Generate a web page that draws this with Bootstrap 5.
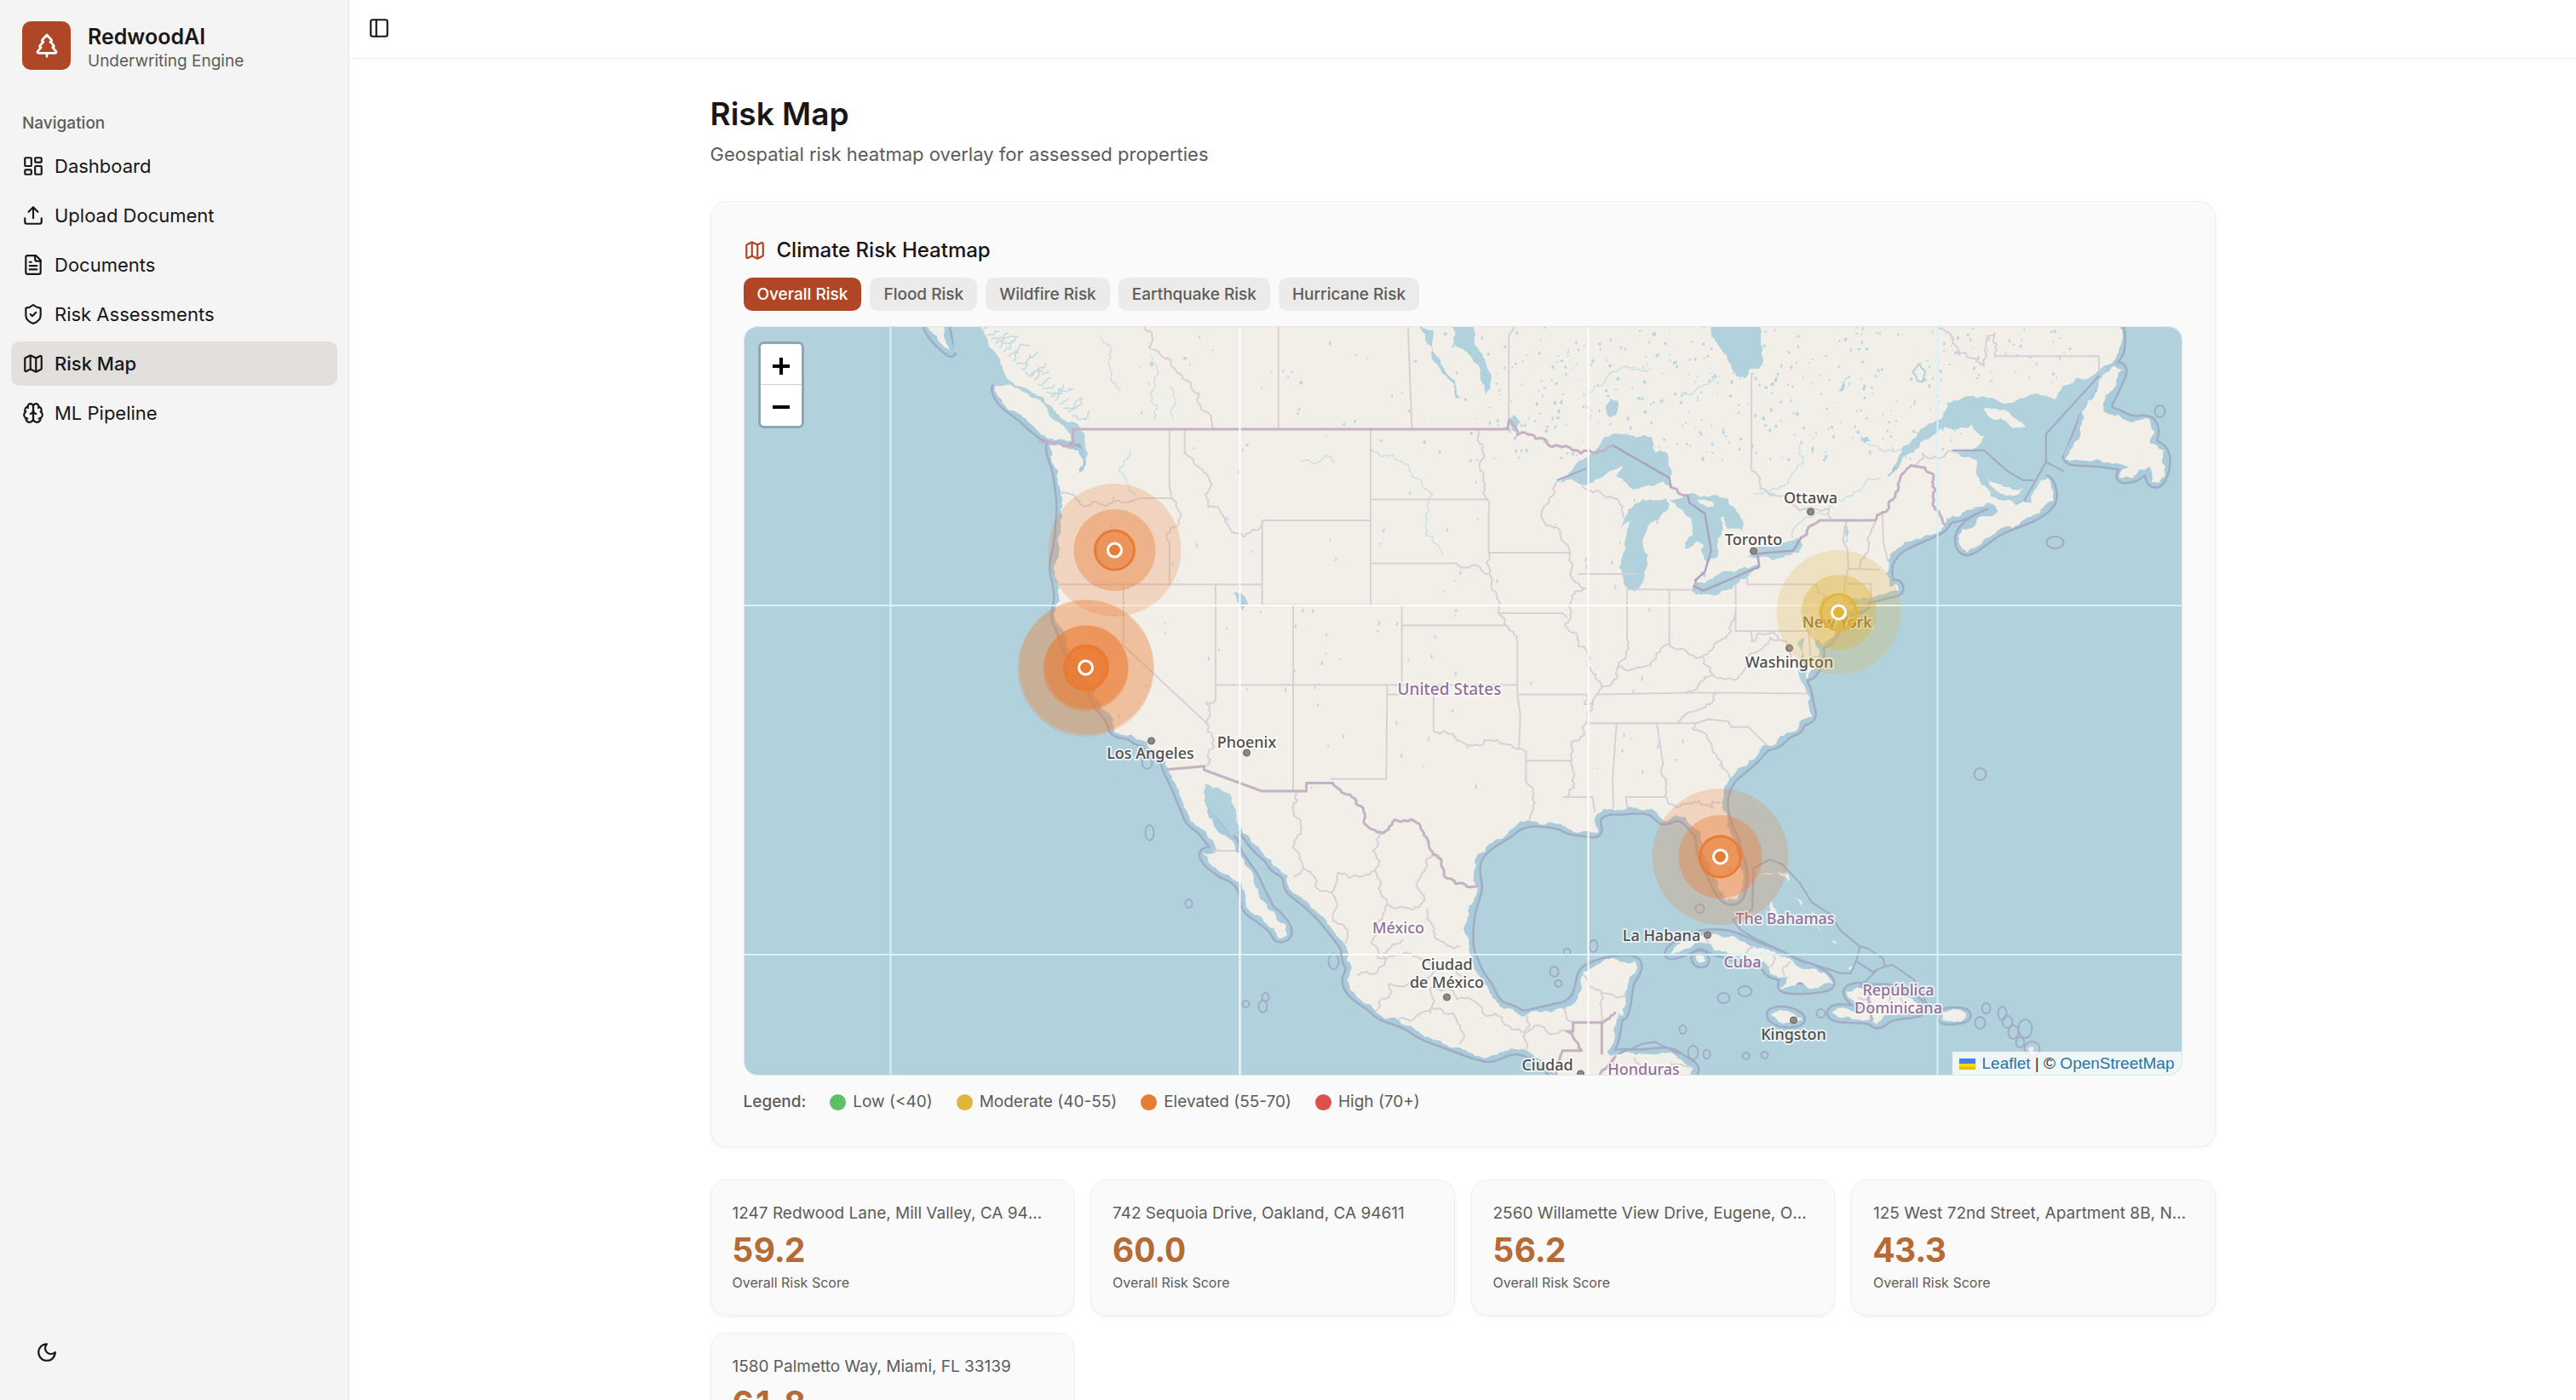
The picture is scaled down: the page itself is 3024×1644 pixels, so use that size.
<!DOCTYPE html>
<html lang="en">
<head>
<meta charset="utf-8">
<meta name="viewport" content="width=device-width, initial-scale=1">
<title>Risk Map - RedwoodAI</title>
<link href="https://cdn.jsdelivr.net/npm/bootstrap@5.3.0/dist/css/bootstrap.min.css" rel="stylesheet">
<style>
:root{--ink:#171717;--dim:#5c5c5c;--brand:#af4727;--line:#ebebeb;--panel:#fafafa}
body{font-family:Inter,"Liberation Sans",sans-serif;font-size:22px;line-height:32px;color:var(--ink);background:#fff}
.ico{width:26px;height:26px;flex:none;fill:none;stroke:currentColor;stroke-width:2;stroke-linecap:round;stroke-linejoin:round}
.fs-xs{font-size:19px;line-height:26px}
.dim{color:var(--dim)}
.side{width:410px;flex:none;background:#f4f4f4;border-right:1px solid #e6e6e6}
.brand-row{height:106px;padding:0 26px;gap:20px}
.brand-tile{width:57px;height:57px;border-radius:10px;background:var(--brand);color:#fff}
.brand-tile .ico{width:32px;height:32px}
.brand-name{font-size:25px;line-height:32px;font-weight:600;padding-top:5px}
.side-label{padding:26px 26px 11px;font-weight:500}
.side-nav{padding:0 13px;gap:6px}
.side-nav .nav-link{height:52px;padding:0 13px;gap:12px;border-radius:10px;color:var(--ink)}
.side-nav .nav-link.active{background:#e3dfdc;font-weight:500}
.icon-btn{width:46px;height:46px;padding:0;color:var(--ink)}
.side-foot{padding:0 32px 33px}
.topbar{height:69px;padding:0 12px 2px;border-bottom:1px solid var(--line)}
.scroller{min-height:0;overflow:auto;scrollbar-width:none}
.page{max-width:1843px;padding:40px 38px 38px}
.page-title{font-size:37px;line-height:50px;font-weight:600;margin:0}
.page-sub{padding-top:6px;margin:0 0 39px}
.panel{background:var(--panel);border:1px solid #efefef;border-radius:19px;box-shadow:0 2px 4px rgba(0,0,0,.05)}
.panel-big{padding:38px}
.panel-title{font-size:24px;line-height:38px;font-weight:500;margin:0;gap:13px}
.panel-title .ico{color:var(--brand)}
.chip{height:39px;padding:0 16px;border:0;border-radius:10px;font-size:19px;line-height:26px;font-weight:500;background:#ecebe9;color:var(--dim)}
.chip.on{background:var(--brand);color:#fff}
.chips{gap:10px;padding:13px 0 18px}
.map-box{height:880px;border:1px solid #e3e6e7;border-radius:16px;overflow:hidden;background:#b1d2dd}
.map-box>svg{display:block;width:100%;height:100%}
.zoom-ctl{left:16px;top:17px;border:3px solid rgba(0,0,0,.2);border-radius:7px;background-clip:padding-box}
.zoom-ctl button{width:48px;height:48px;border:0;background:#fff;color:#000;padding:0}
.zoom-ctl button:first-child{border-radius:4px 4px 0 0;border-bottom:1px solid #ccc}
.zoom-ctl button:last-child{border-radius:0 0 4px 4px}
.attrib{right:0;bottom:0;background:rgba(255,255,255,.8);padding:0 8px;font-family:"Liberation Sans",Arial,sans-serif;font-size:19px;line-height:27px;color:#333}
.attrib a{color:#2a73a5;text-decoration:none}
.attrib svg{margin-right:2px}
.city{font:500 18px "Noto Sans","Open Sans",sans-serif;fill:#4f4f4f}
.land-name{font:500 18px "Noto Sans","Open Sans",sans-serif;fill:#92719a}
.land-name.wide{font-size:19px}
.city,.land-name{text-anchor:middle;paint-order:stroke;stroke:rgba(255,255,255,.7);stroke-width:4px;stroke-linejoin:round}
.legend{gap:28px;padding-top:18px;padding-bottom:1px}
.swatch{width:19px;height:19px;border-radius:50%}
.score-row{--bs-gutter-x:19px;--bs-gutter-y:20px;padding-top:38px}
.mini{padding:26px 30px 26px 25px}
.score{font-size:39px;line-height:52px;font-weight:700;font-variant-numeric:tabular-nums;color:#b56b35;padding-top:4px}
.tiny{font-size:16px;line-height:24px}
</style>
</head>
<body>
<svg class="d-none" aria-hidden="true">
  <symbol id="i-map" viewBox="0 0 24 24"><path d="M14.106 5.553a2 2 0 0 0 1.788 0l3.659-1.83A1 1 0 0 1 21 4.619v12.764a1 1 0 0 1-.553.894l-4.553 2.277a2 2 0 0 1-1.788 0l-4.212-2.106a2 2 0 0 0-1.788 0l-3.659 1.83A1 1 0 0 1 3 19.381V6.618a1 1 0 0 1 .553-.894l4.553-2.277a2 2 0 0 1 1.788 0z"/><path d="M15 5.764v15M9 3.236v15"/></symbol>
</svg>
<div class="d-flex vh-100 overflow-hidden">
  <aside class="side d-flex flex-column">
    <div class="brand-row d-flex align-items-center">
      <div class="brand-tile d-flex align-items-center justify-content-center">
        <svg class="ico" viewBox="0 0 24 24"><path d="m17 14 3 3.3a1 1 0 0 1-.7 1.7H4.7a1 1 0 0 1-.7-1.7L7 14h-.3a1 1 0 0 1-.7-1.7L9 9h-.2A1 1 0 0 1 8 7.3L12 3l4 4.3a1 1 0 0 1-.8 1.7H15l3 3.3a1 1 0 0 1-.7 1.7H17Z"/><path d="M12 22v-3"/></svg>
      </div>
      <div>
        <div class="brand-name">RedwoodAI</div>
        <div class="fs-xs dim">Underwriting Engine</div>
      </div>
    </div>
    <div class="side-label fs-xs dim">Navigation</div>
    <nav class="side-nav nav flex-column">
      <a class="nav-link d-flex align-items-center" href="#"><svg class="ico" viewBox="0 0 24 24"><rect x="3" y="3" width="7" height="9" rx="1"/><rect x="14" y="3" width="7" height="5" rx="1"/><rect x="14" y="12" width="7" height="9" rx="1"/><rect x="3" y="16" width="7" height="5" rx="1"/></svg>Dashboard</a>
      <a class="nav-link d-flex align-items-center" href="#"><svg class="ico" viewBox="0 0 24 24"><path d="M21 15v4a2 2 0 0 1-2 2H5a2 2 0 0 1-2-2v-4M17 8l-5-5-5 5M12 3v12"/></svg>Upload Document</a>
      <a class="nav-link d-flex align-items-center" href="#"><svg class="ico" viewBox="0 0 24 24"><path d="M15 2H6a2 2 0 0 0-2 2v16a2 2 0 0 0 2 2h12a2 2 0 0 0 2-2V7Z"/><path d="M14 2v4a2 2 0 0 0 2 2h4M10 9H8M16 13H8M16 17H8"/></svg>Documents</a>
      <a class="nav-link d-flex align-items-center" href="#"><svg class="ico" viewBox="0 0 24 24"><path d="M20 13c0 5-3.5 7.5-7.66 8.95a1 1 0 0 1-.67-.01C7.5 20.5 4 18 4 13V6a1 1 0 0 1 1-1c2 0 4.5-1.2 6.24-2.72a1.17 1.17 0 0 1 1.52 0C14.51 3.81 17 5 19 5a1 1 0 0 1 1 1z"/><path d="m9 12 2 2 4-4"/></svg>Risk Assessments</a>
      <a class="nav-link active d-flex align-items-center" href="#" aria-current="page"><svg class="ico" viewBox="0 0 24 24"><use href="#i-map"/></svg>Risk Map</a>
      <a class="nav-link d-flex align-items-center" href="#"><svg class="ico" viewBox="0 0 24 24"><path d="M12 5a3 3 0 1 0-5.997.125 4 4 0 0 0-2.526 5.77 4 4 0 0 0 .556 6.588A4 4 0 1 0 12 18Z"/><path d="M12 5a3 3 0 1 1 5.997.125 4 4 0 0 1 2.526 5.77 4 4 0 0 1-.556 6.588A4 4 0 1 1 12 18Z"/><path d="M15 13a4.5 4.5 0 0 1-3-4 4.5 4.5 0 0 1-3 4M17.599 6.5a3 3 0 0 0 .399-1.375M6.003 5.125A3 3 0 0 0 6.401 6.5M3.477 10.896a4 4 0 0 1 .585-.396M19.938 10.5a4 4 0 0 1 .585.396M6 18a4 4 0 0 1-1.967-.516M19.967 17.484A4 4 0 0 1 18 18"/></svg>ML Pipeline</a>
    </nav>
    <div class="side-foot mt-auto">
      <button class="icon-btn btn d-flex align-items-center justify-content-center" type="button" aria-label="Toggle theme"><svg class="ico" viewBox="0 0 24 24"><path d="M12 3a6 6 0 0 0 9 9 9 9 0 1 1-9-9Z"/></svg></button>
    </div>
  </aside>

  <div class="d-flex flex-column flex-fill overflow-hidden">
    <header class="topbar d-flex align-items-center flex-shrink-0">
      <button class="icon-btn btn d-flex align-items-center justify-content-center" type="button" aria-label="Toggle sidebar"><svg class="ico" viewBox="0 0 24 24"><rect x="3" y="3" width="18" height="18" rx="2"/><path d="M9 3v18"/></svg></button>
    </header>
    <main class="scroller flex-grow-1">
      <div class="page mx-auto">
        <h1 class="page-title">Risk Map</h1>
        <p class="page-sub dim">Geospatial risk heatmap overlay for assessed properties</p>

        <section class="panel panel-big">
          <h2 class="panel-title d-flex align-items-center"><svg class="ico" viewBox="0 0 24 24"><use href="#i-map"/></svg>Climate Risk Heatmap</h2>
          <div class="chips d-flex flex-wrap">
            <button class="chip on" type="button">Overall Risk</button>
            <button class="chip" type="button">Flood Risk</button>
            <button class="chip" type="button">Wildfire Risk</button>
            <button class="chip" type="button">Earthquake Risk</button>
            <button class="chip" type="button">Hurricane Risk</button>
          </div>
          <div class="map-box position-relative">
            <svg id="map" viewBox="873 384 1688 878" preserveAspectRatio="xMidYMid slice" role="img" aria-label="Map of North America"></svg>
            <div class="zoom-ctl position-absolute d-flex flex-column">
              <button type="button" aria-label="Zoom in"><svg width="20" height="20" viewBox="0 0 20 20"><path d="M0 10h20M10 0v20" stroke="#000" stroke-width="4"/></svg></button>
              <button type="button" aria-label="Zoom out"><svg width="20" height="20" viewBox="0 0 20 20"><path d="M0 10h20" stroke="#000" stroke-width="4"/></svg></button>
            </div>
            <div class="attrib position-absolute"><svg width="19" height="13" viewBox="0 0 19 13"><path fill="#4c7be1" d="M0 0h19v7H0z"/><path fill="#ffd500" d="M0 6h19v4H0z"/><path fill="#e0bc00" d="M0 10h19v3H0z"/></svg> <a href="#">Leaflet</a> | © <a href="#">OpenStreetMap</a></div>
          </div>
          <div class="legend fs-xs dim d-flex flex-wrap align-items-center">
            <span class="fw-medium">Legend:</span>
            <span class="d-flex align-items-center gap-2"><i class="swatch" style="background:#5dc069"></i>Low (&lt;40)</span>
            <span class="d-flex align-items-center gap-2"><i class="swatch" style="background:#e1b43c"></i>Moderate (40-55)</span>
            <span class="d-flex align-items-center gap-2"><i class="swatch" style="background:#e97c34"></i>Elevated (55-70)</span>
            <span class="d-flex align-items-center gap-2"><i class="swatch" style="background:#dc4f4b"></i>High (70+)</span>
          </div>
        </section>

        <div class="row row-cols-4 score-row">
          <div class="col"><div class="panel mini"><div class="fs-xs dim text-truncate">1247 Redwood Lane, Mill Valley, CA 94941</div><div class="score">59.2</div><div class="tiny dim">Overall Risk Score</div></div></div>
          <div class="col"><div class="panel mini"><div class="fs-xs dim text-truncate">742 Sequoia Drive, Oakland, CA 94611</div><div class="score">60.0</div><div class="tiny dim">Overall Risk Score</div></div></div>
          <div class="col"><div class="panel mini"><div class="fs-xs dim text-truncate">2560 Willamette View Drive, Eugene, OR 97401</div><div class="score">56.2</div><div class="tiny dim">Overall Risk Score</div></div></div>
          <div class="col"><div class="panel mini"><div class="fs-xs dim text-truncate">125 West 72nd Street, Apartment 8B, New York, NY 10023</div><div class="score">43.3</div><div class="tiny dim">Overall Risk Score</div></div></div>
          <div class="col"><div class="panel mini"><div class="fs-xs dim text-truncate">1580 Palmetto Way, Miami, FL 33139</div><div class="score">61.8</div><div class="tiny dim">Overall Risk Score</div></div></div>
        </div>
      </div>
    </main>
  </div>
</div>

<script>
// Web Mercator at zoom 4; lists are "lon,lat lon,lat ..."
const X = lon => 2274 + (lon + 67.5) * 18.204;
const Y = lat => 711 + (0.7854 - Math.log(Math.tan(Math.PI / 4 + lat * Math.PI / 360))) * 1043;
let seed = 7;
const rnd = () => (seed = (seed * 16807) % 2147483647) / 2147483647;
const pts = s => s.trim().split(/\s+/).map(p => { const [a, b] = p.split(',').map(Number); return [X(a), Y(b)]; });
// coastlines and river borders get small random bends between their fixed points
function rough(p, q, k, out) {
  const dx = q[0] - p[0], dy = q[1] - p[1], len = Math.hypot(dx, dy);
  if (len < 4 || !k) { out.push(q); return; }
  const t = (rnd() - .5) * k, m = [(p[0] + q[0]) / 2 - dy * t, (p[1] + q[1]) / 2 + dx * t];
  rough(p, m, k, out); rough(m, q, k, out);
}
function path(s, k, closed) {
  const a = pts(s), out = [a[0]];
  for (let i = 1; i < a.length; i++) rough(a[i - 1], a[i], k, out);
  if (closed) rough(a[a.length - 1], a[0], k, out);
  return 'M' + out.map(p => p[0].toFixed(1) + ' ' + p[1].toFixed(1)).join('L') + (closed ? 'Z' : '');
}
// rounded outline through the edge midpoints, for the territorial-water line
function soft(s) {
  const a = pts(s), n = a.length, mid = (p, q) => ((p[0] + q[0]) / 2).toFixed(1) + ' ' + ((p[1] + q[1]) / 2).toFixed(1);
  let r = 'M' + mid(a[n - 1], a[0]);
  for (let i = 0; i < n; i++) r += 'Q' + a[i][0].toFixed(1) + ' ' + a[i][1].toFixed(1) + ' ' + mid(a[i], a[(i + 1) % n]);
  return r + 'Z';
}
const land = [
`-131,57 -130.6,54.2 -129.5,53.3 -128.8,52.7 -128.2,52.1 -127.8,51.6 -127.5,51.1 -126.8,50.8 -125.8,50.5 -125,50.1 -124.5,49.8 -123.8,49.4 -123.2,49.3 -122.8,49 -122.5,48.6 -122.3,48 -122.4,47.5 -122.9,47.1 -122.7,47.8 -122.9,48.1 -123.5,48.15 -124.7,48.38 -124.6,47.9 -124.2,47.2 -124.05,46.3 -123.95,45.6 -124.05,44.7 -124.15,43.8 -124.5,42.85 -124.2,42 -124.1,41.2 -124.4,40.4 -123.8,39.5 -123.7,38.9 -123,38.3 -122.5,37.7 -122.4,37.2 -121.9,36.95 -121.95,36.4 -121.3,35.7 -120.7,35.1 -120.6,34.55 -119.5,34.4 -119.2,34.15 -118.5,34.02 -118.4,33.75 -117.9,33.6 -117.3,33 -117.12,32.53 -116.7,31.8 -116.3,31 -115.95,30.3 -115.7,29.7 -114.9,29.2 -114.5,28.7 -114.1,28.3 -114.05,27.9 -114.9,27.9 -114.5,27.3 -114,27 -113.6,26.7 -113.2,26.6 -112.5,26.2 -112.15,25.5 -112.1,24.8 -111.7,24.4 -111,24 -110.3,23.5 -110,22.9 -109.45,23.1 -109.5,23.6 -110.2,24.3 -110.65,24.6 -110.75,24.9 -111.3,25.8 -111.6,26.5 -112.2,27.2 -112.8,28 -112.9,28.5 -113.5,28.9 -114.3,29.8 -114.65,30.5 -114.8,31.2 -114.8,31.75 -114.2,31.5 -113.5,31.3 -113.1,31.2 -113,30.7 -112.7,30 -112.4,29.3 -111.9,28.8 -111.6,28.4 -111.1,27.95 -110.5,27.5 -110.3,27.1 -109.9,26.9 -109.4,26.6 -109.3,25.8 -108.7,25.4 -108,24.9 -107.2,24.2 -106.5,23.4 -106,22.8 -105.6,22.3 -105.6,21.6 -105.3,21.2 -105.4,20.75 -105.6,20.4 -105.4,19.8 -104.7,19.2 -104,18.85 -103.5,18.3 -102.2,17.9 -101.5,17.6 -100.8,17.1 -99.7,16.7 -98.5,16.3 -97.6,15.95 -96.5,15.65 -95.9,15.8 -95,16.2 -94,16.1 -93,15.5 -92.3,14.7 -91.5,14 -91,13 -83,13 -83.4,14.5 -83.15,15 -83.9,15.4 -84.5,15.85 -85.2,15.95 -86,15.85 -87,15.8 -87.9,15.85 -88.5,15.75 -88.8,15.95 -88.5,16.4 -88.3,17.1 -88.2,17.8 -88.05,18.4 -87.8,18.2 -87.6,19 -87.5,19.8 -87.4,20.3 -86.85,21.1 -87,21.55 -88.1,21.6 -89.5,21.3 -90.35,20.9 -90.5,20.2 -90.7,19.4 -91.3,18.8 -92,18.65 -93,18.45 -94.3,18.15 -94.8,18.5 -95.7,18.75 -96.2,19.3 -96.5,20 -97.1,20.7 -97.4,21.4 -97.75,22.2 -97.8,23 -97.7,24.3 -97.4,25.2 -97.15,25.9 -97.4,26.8 -97.2,27.7 -96.4,28.4 -95.2,29 -94.7,29.4 -93.8,29.7 -92.5,29.6 -91.8,29.5 -91.2,29.2 -90.2,29.1 -89.4,29 -89.6,29.6 -89.4,30.1 -88.6,30.35 -88,30.3 -87,30.4 -86,30.35 -85.5,30 -85.2,29.7 -84.4,30 -83.8,29.9 -83.2,29.3 -82.75,28.9 -82.7,28 -82.5,27.4 -82,26.6 -81.7,25.9 -81.1,25.15 -80.4,25.2 -80.15,25.8 -80.05,26.8 -80.5,28 -80.6,28.5 -81.1,29.4 -81.4,30.4 -81.3,31.3 -80.8,32.1 -79.9,32.7 -79.2,33.2 -78.6,33.85 -77.9,33.9 -77.2,34.5 -76.5,34.7 -76.4,35.1 -75.6,35.3 -75.8,35.9 -76,36.8 -76.3,37.2 -76.4,38 -76.5,39.2 -76.1,39.4 -76.1,38.3 -75.9,37.3 -75.2,38.1 -75.1,38.7 -75.5,39.4 -74.9,39 -74.1,39.7 -74,40.6 -73.5,41 -72.5,41.27 -71.4,41.45 -70.7,41.6 -70,41.7 -70.1,42 -70.6,41.9 -70.8,42.5 -70.7,43.1 -70.1,43.7 -69,44.1 -68.3,44.3 -67.1,44.7 -66.9,45.1 -66,45.2 -64.9,45.6 -64.2,45.8 -63.6,45.4 -64.6,45.2 -65.9,44.6 -66.1,43.9 -65.6,43.5 -64.3,44.2 -63.5,44.6 -62,45 -61,45.3 -60,45.9 -60.4,46.9 -61,46.6 -61.4,45.8 -62.5,45.7 -63.5,45.9 -64.1,46.1 -64.7,46.6 -65,47.2 -65,47.7 -65.7,47.8 -66.3,48 -65.3,48.1 -64.4,48.7 -65.3,49.2 -67,49.1 -68.5,48.5 -69.8,47.7 -71,46.9 -71.3,46.8 -70,47.8 -69.3,48.4 -68.6,49 -67.4,49.4 -66.9,50.1 -65,50.3 -62,50.3 -60,50.25 -58.6,51.1 -57,51.5 -56,51.9 -55.7,52.4 -55.8,53.2 -56.5,54 -57,57`,
`-128.3,50.8 -127.5,50.85 -125.5,50.25 -124.8,49.6 -123.8,49.1 -123.3,48.5 -124.7,48.6 -125.5,48.9 -126.6,49.6 -127.8,50.1`,
`-133.1,54 -131.7,54 -131.6,53.3 -131.3,52.4 -131,52.1 -131.8,52.5 -132.5,53`,
`-59.3,47.7 -58.6,48.5 -58.2,49.2 -57.8,50.2 -57,51.1 -56.2,51.6 -55.5,51.5 -56,50.8 -56.8,49.8 -55.8,49.6 -55,49.3 -53.8,49.4 -53.5,48.9 -53.8,48.4 -52.9,48.1 -52.8,47.4 -53.2,46.7 -53.7,46.7 -53.9,47.4 -54.9,46.9 -55.8,46.9 -55.2,47.4 -56.5,47.6 -58,47.65`,
`-64.5,49.9 -63.4,49.8 -61.8,49.1 -62.6,49.05 -63.8,49.4`,
`-64.3,46.9 -64,46.7 -63.2,46.5 -62,46.45 -62.6,46.1 -63.8,46.4`,
`-73.9,40.6 -72,41 -72.6,41 -73.7,40.85`,
`-84.9,21.9 -84.3,22.5 -83.2,23 -82,23.15 -80.6,23 -79.3,22.4 -77.5,21.8 -76.5,21.2 -75.6,21.1 -74.2,20.2 -75.2,19.9 -77.7,19.85 -77.1,20.6 -78.3,20.8 -78.7,21.5 -80.2,21.8 -81.8,22.15 -82.8,22.7 -83.5,22.3 -84.2,22.05`,
`-83.1,21.8 -82.7,21.9 -82.5,21.5 -82.9,21.45`,
`-74.4,18.35 -74,18.65 -72.7,18.5 -72.4,18.7 -72.8,19.1 -73.4,19.7 -72.7,19.95 -71.7,19.8 -70.7,19.85 -69.9,19.6 -69.2,19.3 -68.4,18.65 -69,18.4 -70.5,18.3 -71.4,17.65 -71.8,18.1 -73.8,18.1`,
`-78.3,18.3 -77.8,18.5 -76.9,18.4 -76.2,17.95 -77.1,17.8 -77.8,17.9`,
`-67.2,18.4 -65.7,18.4 -65.7,18.1 -67.2,17.95`
];
const islets = [`-78.2,25.1 -77.9,24.6 -77.7,23.9 -78.3,24.4`, `-77.9,26.8 -77.1,26.6 -77.1,26.2 -77.3,26.5`, `-78.9,26.6 -78,26.7 -78.2,26.6`, `-73.3,21.1 -73,21.3 -73.1,21`, `-76.8,25.3 -76.2,25 -76.3,24.7 -76.6,25.2`, `-75.8,24.6 -75.3,24.2 -75.6,24.4`, `-75.3,23.6 -74.9,23.1 -75.1,23.4`, `-74.3,22.8 -73.9,22.6 -74.2,22.6`, `-61.7,16.2 -61.3,16.3 -61.4,15.9`, `-61.4,15.5 -61.3,15.2 -61.3,15.6`, `-61.1,14.8 -60.9,14.6 -60.9,14.9`];
const inner = [
`-65,45.6 -61.6,45.9 -60.5,47 -59.4,47.9 -58.4,49.6 -56.6,51.4 -57,52 -66,50.8 -71,47.5 -68,47 -65,46`,
`-133,56 -131.2,54.2 -130.9,52.2 -128.5,50.9 -125,49 -122.8,48.4 -122,47 -121,49 -125,52 -127,56`,
`-76.8,39.6 -76.8,36.9 -76,37.1 -75.7,38 -75.7,39.6`, `-74.2,41.2 -73.7,40.8 -72.2,41 -71.7,41.5`,
`-115,32 -113,31.4 -112.4,29.2 -113,28.8 -115,31`
];
const lakes = [
`-92.1,46.75 -91,47.3 -90,47.9 -89.2,48.4 -88.4,48.8 -87.5,48.8 -86.5,48.75 -86,48.7 -85.7,48 -84.9,47.95 -84.7,47.3 -84.6,46.5 -85.2,46.75 -86.5,46.5 -87.4,46.5 -88.2,46.95 -87.8,47.45 -88.6,47.2 -89.5,46.85 -90.5,46.6 -91.2,46.85`,
`-85,46 -86,45.95 -87,45.75 -87.7,45.1 -87.9,44.6 -87.2,45 -87.6,44.2 -87.9,43.2 -87.8,42.4 -87.5,41.7 -87,41.65 -86.5,42.1 -86.2,43 -86.5,43.8 -86.2,44.7 -85.5,45 -85,45.4 -84.8,45.75`,
`-84.8,45.9 -84,46 -83.5,46.2 -82,46.15 -81,45.95 -80.5,45.5 -80,44.8 -80.1,44.5 -81,44.6 -81.3,45.2 -81.5,45.1 -81.3,44.6 -81.7,43.9 -81.7,43.3 -82.4,43 -82.6,43.9 -83,44.05 -83.8,43.7 -83.8,43.95 -83.3,44.3 -83.4,45.1 -84,45.5`,
`-83.4,41.7 -82.7,41.5 -81.7,41.5 -80.5,42 -79,42.75 -79,42.9 -80.3,42.75 -81.2,42.65 -82,42.25 -83.1,42.05`,
`-79.8,43.3 -79,43.27 -77.5,43.27 -76.4,43.5 -76.2,43.9 -76.5,44.2 -77.5,43.95 -79,43.8`,
`-82.4,54 -82.1,52.9 -81.5,52.3 -81,51.8 -80.5,51.2 -79.9,51.1 -79.6,51.5 -79,51.5 -78.8,52.2 -79,53.3 -78.9,54`,
`-98.9,53.3 -97.5,53.3 -97.3,52.4 -96.7,51.8 -96.3,51 -96.7,50.4 -97,51.2 -97.6,52 -98.7,52.5`,
`-101.2,53.4 -100,53 -99.8,52 -99,51.2 -98.6,50.9 -98.3,50.3 -98.6,50.3 -98.9,51 -99.6,51.5 -100,51.8 -100.5,52.6`,
`-88.9,49.9 -88.6,50.3 -88.1,50.2 -88.2,49.6 -88.6,49.5`, `-73.9,50.6 -73.2,51.2 -73,51.3 -73.6,50.6`, `-72.4,48.6 -72,48.7 -71.8,48.5 -72.2,48.4`,
`-112.9,41.6 -112.4,41.6 -112,41 -112.3,40.7 -112.6,41.1`, `-95.2,49.3 -94.8,49.6 -94.4,49.3 -94.8,48.9`, `-73.4,44.9 -73.2,44.5 -73.4,43.8 -73.4,44.3`,
`-80.9,27.1 -80.7,26.8 -81.1,26.8`, `-82.8,42.6 -82.5,42.6 -82.5,42.3`
];
const national = [
`-123.3,49 -95.15,49`, `-111.07,31.33 -108.2,31.33 -108.2,31.78 -106.5,31.78`, `-114.8,32.5 -111.07,31.33`, `-117.12,32.53 -114.8,32.7 -114.8,32.5`, `-75,45 -71.5,45`, `-91.7,16.07 -90.45,16.07`, `-91,17.25 -91,17.8 -89.15,17.8 -89.15,15.9`];
const nationalWavy = [
`-95.15,49 -95.1,49.4 -94.6,48.75 -93,48.6 -92,48.3 -91,48.1 -90,48.1 -89.5,48 -88.4,48.3`, `-84.7,46.5 -84.3,46.4 -83.6,46.1`,
`-83.1,42.2 -83.2,41.9`, `-76.3,44.2 -75,45`, `-71.5,45 -71.4,45.25 -70.8,45.4 -70.3,46 -70,46.7 -69.2,47.45 -68.3,47.35 -67.8,47.07 -67.8,45.7 -67.4,45.4 -67,44.8`,
`-123.2,49 -123.3,48.7 -123.2,48.3 -124.5,48.4 -125.4,48.5`,
`-106.5,31.78 -106,31.4 -105,30.65 -104.5,29.6 -103.3,29 -102.9,29.2 -102.5,29.75 -101.4,29.77 -100.7,29.1 -100.3,28.3 -99.5,27.5 -99.1,26.4 -98,26.05 -97.2,25.95`,
`-92.2,14.5 -92.1,15.1 -91.7,16.07`, `-90.45,16.07 -91,16.9 -91.4,17.25 -91,17.25`, `-89.15,17.8 -88.3,18.4`, `-88.3,15.7 -89.3,14.5`, `-71.7,19.7 -71.9,18.8 -71.7,18`];
const nationalSea = [`-88.4,48.3 -84.8,46.9 -84.7,46.5`, `-83.6,46.1 -83.5,45.8 -82.5,45.3 -82.1,43.6 -82.5,42.6 -83.1,42.2`, `-83.2,41.9 -82.6,41.7 -81,42.2 -79,42.85 -79.1,43.4 -79.2,43.45 -76.8,43.6 -76.3,44.2`];
const states = [
`-117.03,49 -117.03,46.4`, `-119,46 -116.9,46`, `-117.03,43.8 -117.03,42`, `-116.05,49 -116.05,48`, `-124.2,42 -111.05,42`, `-120,42 -120,39 -114.63,35`, `-114.05,42 -114.05,36.2`, `-114.05,37 -94.6,37`,
`-111.05,44.5 -111.05,45 -104.05,45 -104.05,41 -111.05,41 -111.05,44.5`, `-109.05,41 -109.05,31.33`, `-102.05,41 -102.05,37`, `-104.05,41 -102.05,41 -102.05,40 -95.3,40`, `-104.05,49 -104.05,45`, `-104.05,45.94 -96.6,45.94`, `-104.05,43 -98.5,43`,
`-96.45,45.3 -96.45,43.5 -91.2,43.5`, `-95.8,40.6 -91.7,40.6`, `-94.6,39.1 -94.6,36.5 -94.4,35.4 -94.5,33.65`, `-94.6,36.5 -90.15,36.5`, `-90.65,42.5 -87,42.5`, `-87.53,41.7 -87.53,39.3`, `-84.8,41.7 -84.8,39.1`, `-87,41.76 -83.5,41.73`,
`-80.52,42 -80.52,39.72 -75.8,39.72`, `-79.76,42.25 -79.76,42 -75.35,42`, `-89.4,36.5 -83.7,36.6 -81.7,36.6 -75.9,36.55`, `-90.2,35 -83.1,35 -82.3,35.2 -81,35.1 -80.8,34.8 -79.7,34.8 -78.55,33.86`, `-85.6,35 -85.2,32.8`, `-85,31 -87.6,31 -87.5,30.4`, `-88.2,35 -88.45,32 -88.4,30.4`, `-91.6,31 -89.75,31 -89.6,30.2`, `-94.04,33 -91.15,33`, `-94.04,33.5 -94.04,32`, `-103,37 -103,36.5 -100,36.5 -100,34.6`, `-103,36.5 -103.05,32 -106.6,32`, `-73.3,43.6 -73.25,42.75 -73.5,42.05 -73.5,41.2`, `-73.25,42.75 -71.3,42.7`, `-73.5,42.03 -71.8,42.03 -71.8,41.4`, `-71.05,45.3 -71,44 -70.7,43.1`, `-75.8,39.72 -75.7,38.45 -75.05,38.45`,
`-110,54 -110,49`, `-101.7,54 -101.4,49`, `-95.15,49.4 -95.15,52.8 -94.5,53.4`, `-79.5,51.3 -79.5,47.5`, `-63.8,52 -57.1,52 -57.1,51.4`, `-114.2,28 -112.8,28`];
const statesWavy = [
`-124,46.25 -123.2,46.15 -122.8,45.7 -121.2,45.65 -119.3,45.93 -119,46`, `-117.03,46.4 -116.9,46 -116.5,45.5 -117.2,44.4 -117.03,43.8`, `-116.05,48 -115,47.3 -114.3,46.6 -114.5,45.6 -113.9,45.6 -113.4,44.9 -113,44.45 -111.5,44.55 -111.05,45`, `-114.05,36.2 -114.7,36.1 -114.63,35 -114.2,34.2 -114.5,33.5 -114.7,32.7`, `-98.5,43 -97.9,42.8 -96.5,42.5`,
`-97.2,49 -96.8,47 -96.6,46 -96.45,45.3`, `-96.45,43.5 -96.6,43 -96.4,42.5 -95.9,41.5 -95.8,40.6 -95.3,40 -94.9,39.7 -94.6,39.1`, `-91.7,40.6 -91.4,40.4`, `-90.15,36.5 -90.3,36 -89.7,36`,
`-92.1,46.7 -92.3,46.1 -92.9,45.6 -92.75,44.75 -91.3,43.8 -91.2,43.5 -91.1,42.7 -90.2,41.8 -91.1,41.2 -91.1,40.7 -91.5,40.1 -90.7,39 -90.1,38.7 -90.1,38 -89.5,37.3 -89.2,37 -89.5,36.5 -89.7,36 -90.1,35.1 -91.1,34 -91.1,33 -90.9,32.3 -91.6,31`,
`-90.4,46.55 -89,46.1 -88.1,45.9 -87.8,45.3 -87.6,45.1`, `-87.53,39.3 -87.6,38.7 -88.1,37.9`, `-89.2,37 -88.5,37.1 -88.1,37.9 -87.1,37.8 -86,38 -85.4,38.7 -84.8,39.1 -84.2,38.8 -83.6,38.6 -82.6,38.5 -82.2,38.7 -81.7,39.2 -80.8,39.7 -80.52,40.6`, `-75.35,42 -74.7,41.4 -75.1,41 -75.1,40.6 -74.8,40.2 -75.4,39.8`, `-82.6,38.4 -82.6,38.1 -81.97,37.5 -83.7,36.6`, `-81.97,37.5 -81.3,37.3 -80.3,37.5 -79.7,38.5 -78.9,38.8 -78.3,39.4 -77.7,39.3 -77,38.9 -77,38.3`, `-79.5,39.72 -79.5,39.2 -78.4,39.6 -77.7,39.3`, `-84.3,35 -83.5,35.6 -82,36.1 -81.7,36.6`, `-83.1,35 -83.3,34.7 -81.9,33.4 -81.4,32.6 -80.9,32.05`, `-85.2,32.8 -85,32 -85,31 -84.9,30.7 -82.2,30.55 -82,30.4 -82,30.75 -81.5,30.7`, `-94.04,32 -93.6,31 -93.8,29.8`, `-100,34.6 -98.5,34.1 -97,33.8 -95.5,33.9 -94.5,33.65 -94.04,33.5`, `-71.5,45 -72,44.2 -72.45,42.73`, `-73.35,45 -73.3,43.6`,
`-118.7,53.3 -116.9,51.85 -115.1,50.5 -114.05,49`, `-79.5,47.5 -78.9,46.4 -77.5,46.1 -76,45.5 -74.5,45.5 -74.4,45.1`, `-69,47.4 -68.4,47.9 -67,47.9 -66,48`, `-67.6,53.4 -66.5,52.5 -65.3,51.9 -64.5,51.6 -64.3,52.8 -63.8,52.9 -63.8,52`,
`-108.87,31.3 -108.56,29.7 -109,28.3 -108.4,27 -109,26.5`, `-108.4,27 -107.6,26.1 -106.6,25.6 -106.15,26.75 -104.7,26.5 -103.75,26.8 -103.9,28 -103.1,29.1`, `-103.75,26.8 -103.4,26.2 -103,24.9 -100.9,24.75 -100.6,25.3 -101,26.3 -100.1,27.7 -99.6,27.5`, `-106.6,25.6 -106.4,24.5 -105.7,23.5 -105.7,22.6`, `-103,24.9 -103.9,23.8 -104,22.6 -103.6,21.7 -102.5,21.9 -101.5,22 -100.5,21.5 -99.4,21.2`, `-100.4,24.6 -100,23.6 -99.5,22.7 -98.3,22.4`, `-104.9,20.7 -103.7,20.8 -103.2,22 -102,22.8`, `-103.7,18.5 -103,19.3 -102.8,20.2 -101.5,20.2 -100.4,20.2 -99.4,21.2 -98.5,20.8 -97.7,20`, `-102.2,18 -100.8,18.4 -99.4,18.5 -98.5,17.9 -98.3,16.5`, `-100.2,18.4 -100.2,19.9 -99.1,20 -98.5,19.2 -97.2,19 -96.5,18.2 -95,17.4 -94.1,17.2 -94,16.2`, `-94.1,17.2 -93.5,17.6 -92.7,17.3 -91.4,17.3`, `-94.1,17.2 -94,18.2`, `-91,17.8 -91.5,18.7`, `-90.4,20.7 -89.3,19.8 -89.2,17.8`, `-87.6,19.6 -89.3,19.8`, `-87,15.6 -86.6,14.8 -85,14.9 -83.3,15`, `-88.5,15.6 -87.8,14.6`, `-82.3,23 -82.3,22.6`, `-79.4,22.4 -79.8,22`, `-78,21.9 -78.4,21.1`, `-77,21.5 -77.4,20.7`, `-70.8,19.8 -70.6,18.4`, `-69.8,19.5 -69.9,18.5`, `-72.6,19.3 -71.9,19.2`];
const seaLines = [
`-79.36,27 -78.3,27.5 -77.5,27.2 -76.4,26.15 -75.6,25 -74.4,24.3 -73.75,23.35 -72.5,22.4 -72.7,21.65 -73.1,20.8 -73.75,20.8 -76.2,21.55 -79.3,22.9 -80.2,23.4 -80.7,24 -79.45,24.6 -79.36,27`,
`-72.5,22.4 -72,22.3 -71,21.7 -70.9,21.2 -71.7,20.9 -72.7,21.5`, `-70.9,21.2 -70.4,21.3 -69,20.4 -68.1,18.8`, `-71.5,20.9 -72.5,20 `, `-57.1,51.2 -60.5,48.8 -60.5,47.6 -61.4,46.5 -61.9,45.9`, `-60.5,47.6 -59.4,47.2`, `-66.5,48.1 -64.5,48.1 -63,47.2 -62,46.8 -61.3,46.8`, `-90.2,47.3 -92,46.8`,
`-88,15.9 -86.5,16.5 -85.7,16.6 -84.2,15.9`];
const rings = [[1349,978,5,9],[1395,1061,4,5],[1462,1179,4,4],[1482,1182,5,7],[1485,1171,4,5],[1565,1129,6,9],[1839,1118,4,4],[1870,1111,5,7],[1824,1141,5,6],[1829,1155,4,4],[2048,1164,8,6],[2023,1172,7,6],[1975,1209,4,5],[1995,1067,5,5],[2324,909,7,7],[2412,637,10,7],[2535,483,6,7],[2137,1190,5,5],[2049,1240,4,4],[2071,1239,4,4],[2003,1238,4,5],[1987,1236,6,8],[2324,1201,6,7],[2331,1184,5,6],[2350,1190,5,8],[2356,1200,6,7],[2363,1212,6,8],[2377,1208,8,11],[2371,1224,5,6],[2385,1232,9,9],[1346,896,6,7]];
const city = [['Ottawa',2125,591,2125,601],['Toronto',2058,640,2058,647],['New York',2156,737],['Washington',2100,784,2100,761],['Los Angeles',1350,891,1351,870],['Phoenix',1463,878,1463,884],['Ciudad',1698,1139],['de México',1698,1160,1698,1171],['La Habana',1950,1105,2004,1098],['Kingston',2105,1221,2105,1198],['Ciudad',1816,1257,1855,1261]];
const country = [['United States',1701,816,' wide'],['México',1641,1096,''],['Cuba',2045,1136,''],['The Bahamas',2095,1085,''],['República',2228,1169,''],['Dominicana',2228,1190,''],['Honduras',1929,1262,'']];
const heat = [[1308,646,78,48,23,'#e97c34'],[1275,783,79,49,25,'#e97c34'],[1274,785,80,50,25,'#e97c34'],[2158,719,73,44,21,'#e1b43c'],[2019,1006,80,49,24,'#e97c34']];
const pins = [[1308,646,'#e97c34'],[1274,784,'#e97c34'],[2158,719,'#e1b43c'],[2019,1006,'#e97c34']];

const d = (list, k, closed) => list.map(s => path(s, k, closed)).join('');
const landD = d(land, .36, true), islD = d(islets, .3, true), limitD = land.map(soft).join('');
let tarns = '';
for (let i = 0; i < 760; i++) {
  const lon = -119 + rnd() * 60, lat = 47.6 + rnd() * 6, r = rnd();
  if (lon < -97 && r > .16) continue;
  if (lon > -66 && lat < 50.8) continue;
  if (lon > -86 && lon < -79 && lat < 46.5) continue;
  const x = X(lon), y = Y(lat), a = .8 + rnd() * 2, b = .8 + rnd() * 2.8;
  tarns += `M${x.toFixed(1)} ${y.toFixed(1)}l${a.toFixed(1)} ${(-b).toFixed(1)} ${(a * .7).toFixed(1)} ${(b * .6).toFixed(1)} ${(-a * .5).toFixed(1)} ${(b * 1.1).toFixed(1)}z`;
}
for (let i = 0; i < 90; i++) {
  const x = X(-121 + rnd() * 40), y = Y(31.5 + rnd() * 16), b = 1 + rnd() * 3;
  tarns += `M${x.toFixed(1)} ${y.toFixed(1)}l1.5 ${b.toFixed(1)} -1 ${b.toFixed(1)} -1.5 -1z`;
}
const fjords = [];
for (let i = 0; i < 24; i++) { const t = i / 24, lo = -129.6 + t * 6.6, la = 53.3 - t * 3.9; fjords.push(`${lo},${la} ${lo + .5 + rnd() * .8},${la + rnd() * .7}`); }
const rivers = [`-121.5,52.8 -120.8,51.9 -120.2,50.6`, `-118.2,52 -118,51 -117.8,50 -118,49.4`, `-117,50.8 -116.8,49.5`, `-108.5,47.6 -107,47.9 -106.4,47.6`, `-104,48.1 -102.6,47.9 -101.6,47.4 -100.8,46.8 -100.3,45.4 -100.5,44.4 -99.4,43.4`, `-76.8,44.2 -74.6,45.3 -72.8,46.3 -71.2,46.9`, `-119.6,48.1 -120.3,47.2 -119.2,46.2`, `-84,50.5 -81.5,51.2`, `-90,50.5 -86,51.5`, `-72,48.4 -69.8,48.1`, `-76.2,48.4 -77,46.9 -78.4,46.2`, `-79.3,46.2 -78,46.2`];
const mark = heat.map(([x, y, a, b, c, f]) => `<circle cx="${x}" cy="${y}" r="${a}" fill="${f}" fill-opacity=".23"/><circle cx="${x}" cy="${y}" r="${b}" fill="${f}" fill-opacity=".38"/><circle cx="${x}" cy="${y}" r="${c}" fill="${f}" fill-opacity=".55" stroke="${f}" stroke-width="3"/>`).join('')
  + pins.map(([x, y, f]) => `<circle cx="${x}" cy="${y}" r="8" fill="${f}" stroke="#fff" stroke-width="3"/>`).join('');

document.getElementById('map').innerHTML = `
<g stroke-linejoin="round" stroke-linecap="round">
<path d="${limitD}" fill="none" stroke="#a0acc4" stroke-width="15"/>
<path d="${limitD}" fill="none" stroke="#a9cbdb" stroke-width="10"/>
<path d="${d(inner, 0, true)}" fill="#b1d2dd"/>
<path d="${landD}${islD}" fill="#f2efe9"/>
<path d="${tarns}" fill="#b7d6df"/>
<path d="${d(lakes, .35, true)}" fill="#b1d2dd"/>
<path d="${path('-83,45.9 -82,45.85 -81.9,45.6 -82.8,45.75', .3, true)}" fill="#f2efe9"/>
<g fill="none">
<path d="${d(fjords, .7)}" stroke="#bfdae1" stroke-width="1.5"/>
<path d="${path('-69.1,51.4 -68.7,51.7 -68.3,51.4 -68.4,51 -68.8,51', .2, true)}" stroke="#b1d2dd" stroke-width="2"/>
<path d="${d(rivers, .5)}" stroke="#cbe0e4" stroke-width="1.5"/>
<path d="${d(states, 0)}" stroke="#d9d0d6" stroke-width="2"/>
<path d="${d(statesWavy, .5)}" stroke="#d9d0d6" stroke-width="2"/>
<path d="${d(seaLines, 0)}" stroke="#a1acc6" stroke-width="2.2"/>
<path d="${d(national, 0)}${d(nationalWavy, .4)}" stroke="#c4b1c3" stroke-width="3"/>
<path d="${d(nationalSea, 0)}" stroke="#a9a5c0" stroke-width="2.5"/>
<g stroke="#a1acc6" stroke-width="2">${rings.map(r => `<ellipse cx="${r[0]}" cy="${r[1]}" rx="${r[2]}" ry="${r[3]}"/>`).join('')}</g>
<path d="M1045 384v879M2274 384v879M873 711h440M2200 711h361M873 1121h700M1720 1121h841" stroke="#d3f4fb" stroke-width="2" stroke-linecap="butt"/>
<path d="M1455 384v879M1864 384v879M1240 711h990M1575 1121h150" stroke="#fff" stroke-width="2" stroke-linecap="butt"/>
</g></g>
${city.filter(c => c[3]).map(c => `<circle cx="${c[3]}" cy="${c[4]}" r="4" fill="#8b8a86" stroke="#5f5f5c" stroke-width="1"/>`).join('')}
${country.map(c => `<text class="land-name${c[3]}" x="${c[1]}" y="${c[2]}">${c[0]}</text>`).join('')}
${city.map(c => `<text class="city" x="${c[1]}" y="${c[2]}">${c[0]}</text>`).join('')}
${mark}`;
</script>
<script src="https://cdn.jsdelivr.net/npm/bootstrap@5.3.0/dist/js/bootstrap.bundle.min.js"></script>
</body>
</html>
